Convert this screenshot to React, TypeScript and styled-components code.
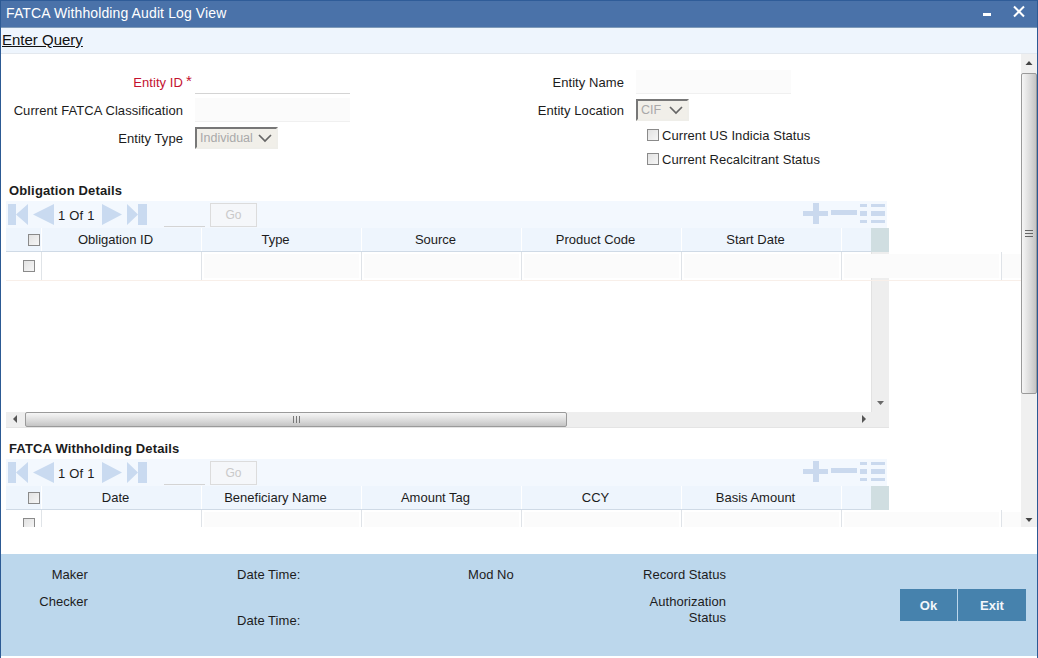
import React from "react";
import styled, { createGlobalStyle } from "styled-components";

const Global = createGlobalStyle`
  html, body { margin: 0; padding: 0; background: #fff; }
  body { font-family: "Liberation Sans", Arial, sans-serif; font-size: 13px; color: #1c1c1c; }
  * { box-sizing: border-box; }
`;

const Window = styled.div`
  width: 1038px; height: 658px; display: flex; flex-direction: column;
  border-left: 1px solid #2c5a94; border-right: 1px solid #2c5a94; background: #fff; overflow: hidden;
`;
const TitleBar = styled.header`
  height: 28px; flex: none; background: #4a72a9; border-top: 1px solid #2f5c98; border-bottom: 1px solid #7f9bb9;
  display: flex; align-items: center; justify-content: space-between; padding: 0 12px 1px 5px; color: #fff;
`;
const Title = styled.h1`margin: 0; font-size: 14px; font-weight: 400; letter-spacing: 0.12px; padding-bottom: 1px;`;
const WindowControls = styled.div`display: flex; align-items: flex-start; gap: 22px; height: 22px; padding-top: 2px;`;
const ActionBar = styled.nav`
  height: 26px; flex: none; background: #eef5fd; border-bottom: 1px solid #e3e8ee; padding: 3px 0 0 1px;
`;
const ActionLink = styled.a`font-size: 15px; color: #111; text-decoration: underline;`;
const Body = styled.div`height: 473px; flex: none; display: flex;`;
const Scroller = styled.main`width: 1020px; height: 473px; overflow: hidden; flex: none;`;
const PageScroll = styled.div`width: 16px; flex: none; position: relative; background: #f0f0f0;`;
const ScrollArrow = styled.svg`position: absolute; left: 4px;`;
const PageThumb = styled.div`
  position: absolute; left: 0; top: 19px; width: 16px; height: 321px; border: 1px solid #9a9a9a; border-radius: 2px;
  background: linear-gradient(90deg, #f6f6f6, #dcdcdc 55%, #c4c4c4);
  display: flex; align-items: center; justify-content: center;
`;
const Form = styled.section`display: flex; padding-top: 15px; height: 130px;`;
const FormCol = styled.div<{ $width: number }>`width: ${(p) => p.$width}px; flex: none;`;
const Field = styled.div<{ $label: number }>`
  display: grid; grid-template-columns: ${(p) => p.$label}px 1fr; column-gap: 12px; align-items: center;
  height: 28px;
`;
const Label = styled.label<{ $required?: boolean }>`
  text-align: right; white-space: nowrap; position: relative; margin-top: -1px; letter-spacing: 0.07px;
  color: ${(p) => (p.$required ? "#c4122f" : "#1c1c1c")};
`;
const Star = styled.span`position: absolute; left: 100%; margin-left: 3px; top: -3px; font-size: 15px;`;
const TextInput = styled.div<{ $width: number; $ruled?: boolean }>`
  width: ${(p) => p.$width}px; height: 24px; margin-top: -2px;
  background: ${(p) => (p.$ruled ? "#fff" : "#fbfbfb")};
  border-bottom: 1px solid ${(p) => (p.$ruled ? "#d4d4d4" : "#f0f0f0")};
`;
const SelectBox = styled.div<{ $width: number }>`
  width: ${(p) => p.$width}px; height: 22px; margin-top: -3px;
  border: 2px solid #efeee9; border-top-color: #777; border-left-color: #777;
  background: #f1efe9; color: #a9a9a9; display: flex; align-items: center; justify-content: space-between;
  padding: 0 3px 0 3px; font-size: 12.5px;
`;
const CheckRow = styled.label`display: flex; align-items: center; height: 24px; margin-left: 246px; white-space: nowrap; letter-spacing: 0.07px;`;
const Check = styled.span`
  display: block; width: 12px; height: 12px; flex: none; border: 1px solid #8a8a8a;
  background: linear-gradient(135deg, #e2e2e2, #f6f6f6);
`;
const CheckText = styled.span`margin-left: 3px;`;
const SectionTitle = styled.h2`margin: 0; padding: 0 0 0 8px; font-size: 13px; letter-spacing: 0.15px; font-weight: 700; height: 17px; line-height: 14px;`;
const GridWrap = styled.div`margin-left: 5px; width: 883px; position: relative;`;
const Pager = styled.div`
  height: 27px; width: 881px; background: #f3f8fe; display: flex; align-items: center; position: relative;
`;
const PagerCount = styled.span`margin-left: 2px; width: 48px; word-spacing: 0.5px; font-size: 13px; padding-top: 2px;`;
const PagerInput = styled.span`width: 41px; height: 25px; border-bottom: 1px solid #d4d4d4; margin-left: 16px;`;
const GoButton = styled.span`
  width: 47px; height: 24px; margin-left: 5px; border: 1px solid #dcdcdc; background: #f5f7fa; color: #c9c9c9;
  display: flex; align-items: center; justify-content: center; font-size: 12px;
`;
const PagerIcon = styled.svg`flex: none;`;
const PagerTools = styled.svg`position: absolute; right: 0; top: 2px;`;
const HeaderRow = styled.div`
  height: 24px; width: 883px; display: flex; background: #eef5fd; border-bottom: 1px solid #cfdae6; position: relative;
`;
const HeadCheck = styled.div`width: 36px; flex: none; display: flex; align-items: center; justify-content: center; padding-left: 21px; border-right: 1px solid #fff;`;
const HeadCell = styled.div<{ $w: number }>`
  width: ${(p) => p.$w}px; flex: none; border-right: 1px solid #fff; display: flex; align-items: center; justify-content: center; padding-right: 12px;
`;
const Corner = styled.div`position: absolute; right: 0; top: 0; width: 18px; height: 24px; background: #d0dee1;`;
const DataRow = styled.div<{ $h: number }>`
  height: ${(p) => p.$h}px; width: 1015px; display: flex; position: relative; z-index: 1; border-bottom: 1px solid #f8efe9;
`;
const RowCheck = styled.div`width: 36px; flex: none; display: flex; align-items: center; justify-content: center; padding-left: 11px; border-right: 1px solid #e0e4e8;`;
const DataCell = styled.div<{ $w: number; $blank?: boolean }>`
  width: ${(p) => p.$w}px; flex: none; border-right: 1px solid #dfe3e8; padding: 2px;
  &::before { content: ""; display: block; height: 24px; background: ${(p) => (p.$blank ? "#fff" : "#fbfbfb")}; }
`;
const Rest = styled.div`flex: 1; background: #fbfbfb; height: 24px; margin-top: 2px;`;
const Viewport = styled.div`height: 131px; position: relative;`;
const VScroll = styled.div`
  position: absolute; right: 0; top: 0; width: 18px; height: 160px; background: #eeeeee;
  border-left: 1px solid #e2e2e2; margin-top: -29px;
`;
const HScroll = styled.div`
  height: 16px; background: #eeeeee; position: relative; border-bottom: 1px solid #e4e4e4;
`;
const HThumb = styled.div`
  position: absolute; left: 19px; top: 0; width: 542px; height: 15px; border: 1px solid #9a9a9a; border-radius: 2px;
  background: linear-gradient(180deg, #f6f6f6, #dcdcdc 55%, #c4c4c4);
  display: flex; align-items: center; justify-content: center;
`;
const Tiny = styled.svg`position: absolute;`;
const Section = styled.section<{ $gap?: number }>`margin-top: ${(p) => p.$gap ?? 0}px;`;
const Clip = styled.div`height: 68px; overflow: hidden; width: 1015px;`;
const Footer = styled.footer`
  height: 102px; flex: none; margin-top: 27px; background: #bcd7ec; display: flex; position: relative; padding-top: 14px;
`;
const FootCol = styled.div<{ $w: number; $right?: boolean; $left?: number }>`
  width: ${(p) => p.$w}px; flex: none; margin-left: ${(p) => p.$left ?? 0}px; text-align: ${(p) => (p.$right ? "right" : "left")};
  display: flex; flex-direction: column; letter-spacing: 0.05px;
`;
const FootText = styled.div<{ $h?: number }>`height: ${(p) => p.$h ?? 14}px; line-height: 14px; white-space: nowrap;`;
const FootButtons = styled.div`display: flex; gap: 1px; margin-left: 174px; margin-top: 21px; height: 32px;`;
const FootButton = styled.button<{ $w: number }>`
  width: ${(p) => p.$w}px; height: 32px; border: 0; padding: 0; background: #4682ad; color: #f2f7fb; font: 700 13px "Liberation Sans", Arial, sans-serif;
`;
const Strip = styled.div`height: 2px; flex: none; background: #fff;`;

const Box = () => <Check />;

function Tools() {
  const c = "#cad9ee";
  return (
    <PagerTools width="84" height="22" viewBox="0 0 84 22" aria-hidden>
      <path d="M10 0h6v8h9v5h-9v8h-6v-8H0V8h10z" fill={c} />
      <rect x="28" y="7" width="26" height="5" fill={c} />
      <path d="M57 1h7v3h-7zM68 1h14v3H68zM57 8h7v5h-7zM68 8h14v5H68zM57 17h7v3h-7zM68 17h14v3H68z" fill={c} />
    </PagerTools>
  );
}

function GridPager() {
  const c = "#c9daf0";
  return (
    <Pager>
      <PagerIcon width="49" height="21" viewBox="0 0 49 21" style={{ marginLeft: 1 }} aria-hidden>
        <path d="M1 0h8v21H1zM9 10.500L21 0v21zM26 10.500L47 0v21z" fill={c} />
      </PagerIcon>
      <PagerCount>1 Of 1</PagerCount>
      <PagerIcon width="46" height="21" viewBox="0 0 46 21" style={{ marginLeft: -4 }} aria-hidden>
        <path d="M0 0l20 10.500L0 21zM25 0l11 10.500L25 21zM36 0h9v21h-9z" fill={c} />
      </PagerIcon>
      <PagerInput />
      <GoButton>Go</GoButton>
      <Tools />
    </Pager>
  );
}

const firstCols = ["Obligation ID", "Type", "Source", "Product Code", "Start Date"];
const secondCols = ["Date", "Beneficiary Name", "Amount Tag", "CCY", "Basis Amount"];

function Grid({ cols }: { cols: string[] }) {
  return (
    <>
      <HeaderRow>
        <HeadCheck><Box /></HeadCheck>
        {cols.map((c) => <HeadCell key={c} $w={160}>{c}</HeadCell>)}
        <Corner />
      </HeaderRow>
      <DataRow $h={29}>
        <RowCheck><Box /></RowCheck>
        <DataCell $w={160} $blank />
        {[0, 1, 2, 3, 4].map((i) => <DataCell key={i} $w={160} />)}
        <Rest />
      </DataRow>
    </>
  );
}

const Chevron = () => (
  <svg width="16" height="10" viewBox="0 0 16 10" aria-hidden><path d="M2 2l6 6 6-6" stroke="#666" strokeWidth="1.700" fill="none" /></svg>
);

export default function App() {
  return (
    <>
      <Global />
      <Window>
        <TitleBar>
          <Title>FATCA Withholding Audit Log View</Title>
          <WindowControls>
            <svg width="8" height="12" viewBox="0 0 8 12" aria-hidden><rect x="0" y="8" width="8" height="3" fill="#fff" /></svg>
            <svg width="12" height="13" viewBox="0 0 12 13" aria-hidden><path d="M1 1.500l10 10M11 1.500l-10 10" stroke="#fff" strokeWidth="2" fill="none" /></svg>
          </WindowControls>
        </TitleBar>
        <ActionBar><ActionLink>Enter Query</ActionLink></ActionBar>
        <Body>
          <Scroller>
            <Form>
              <FormCol $width={400}>
                <Field $label={182}>
                  <Label $required>Entity ID<Star>*</Star></Label>
                  <TextInput $width={155} $ruled />
                </Field>
                <Field $label={182}>
                  <Label>Current FATCA Classification</Label>
                  <TextInput $width={155} />
                </Field>
                <Field $label={182}>
                  <Label>Entity Type</Label>
                  <SelectBox $width={83}>Individual<Chevron /></SelectBox>
                </Field>
              </FormCol>
              <FormCol $width={500}>
                <Field $label={223}>
                  <Label>Entity Name</Label>
                  <TextInput $width={155} />
                </Field>
                <Field $label={223}>
                  <Label>Entity Location</Label>
                  <SelectBox $width={53}>CIF<Chevron /></SelectBox>
                </Field>
                <CheckRow style={{ marginTop: -2 }}><Box /><CheckText>Current US Indicia Status</CheckText></CheckRow>
                <CheckRow><Box /><CheckText>Current Recalcitrant Status</CheckText></CheckRow>
              </FormCol>
            </Form>
            <Section>
              <SectionTitle>Obligation Details</SectionTitle>
              <GridWrap>
                <GridPager />
                <Grid cols={firstCols} />
                <Viewport>
                  <VScroll>
                    <Tiny width="9" height="6" viewBox="0 0 9 6" style={{ left: 4, top: 148 }} aria-hidden><path d="M1 1h7L4.500 5z" fill="#6a6a6a" /></Tiny>
                  </VScroll>
                </Viewport>
                <HScroll>
                  <Tiny width="6" height="9" viewBox="0 0 6 9" style={{ left: 6, top: 3 }} aria-hidden><path d="M5 0v8L1 4z" fill="#555" /></Tiny>
                  <HThumb>
                    <svg width="9" height="7" viewBox="0 0 9 7" aria-hidden><path d="M1.500 0v7M4.500 0v7M7.500 0v7" stroke="#777" /></svg>
                  </HThumb>
                  <Tiny width="6" height="9" viewBox="0 0 6 9" style={{ left: 855, top: 3 }} aria-hidden><path d="M1 0v8l4-4z" fill="#555" /></Tiny>
                </HScroll>
              </GridWrap>
            </Section>
            <Section $gap={14}>
              <SectionTitle>FATCA Withholding Details</SectionTitle>
              <GridWrap>
                <GridPager />
                <Clip><Grid cols={secondCols} /></Clip>
              </GridWrap>
            </Section>
          </Scroller>
          <PageScroll>
            <ScrollArrow width="8" height="6" viewBox="0 0 8 6" style={{ top: 6 }} aria-hidden><path d="M4 1l3.500 4H.5z" fill="#444" /></ScrollArrow>
            <PageThumb>
              <svg width="8" height="7" viewBox="0 0 8 7" aria-hidden><path d="M0 .5h8M0 3.500h8M0 6.500h8" stroke="#666" /></svg>
            </PageThumb>
            <ScrollArrow width="8" height="6" viewBox="0 0 8 6" style={{ top: 463 }} aria-hidden><path d="M.5 1h7L4 5z" fill="#444" /></ScrollArrow>
          </PageScroll>
        </Body>
        <Footer>
          <FootCol $w={87} $right>
            <FootText $h={27}>Maker</FootText>
            <FootText>Checker</FootText>
          </FootCol>
          <FootCol $w={100} $left={149}>
            <FootText $h={46}>Date Time:</FootText>
            <FootText>Date Time:</FootText>
          </FootCol>
          <FootCol $w={100} $left={131}>
            <FootText>Mod No</FootText>
          </FootCol>
          <FootCol $w={158} $right>
            <FootText $h={27}>Record Status</FootText>
            <FootText $h={16}>Authorization</FootText>
            <FootText>Status</FootText>
          </FootCol>
          <FootButtons>
            <FootButton $w={57}>Ok</FootButton>
            <FootButton $w={68}>Exit</FootButton>
          </FootButtons>
        </Footer>
        <Strip />
      </Window>
    </>
  );
}
